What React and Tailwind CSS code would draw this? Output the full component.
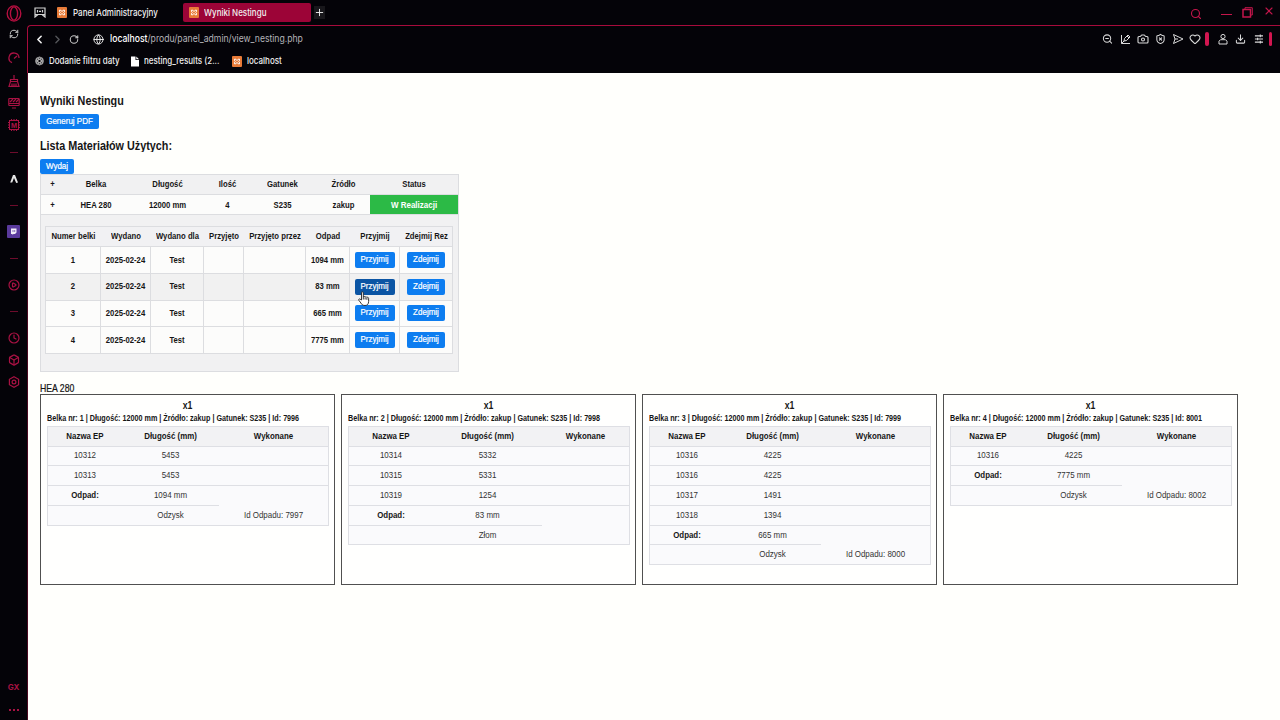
import {
  Box, Camera, ChevronLeft, ChevronRight, CirclePlay, Clock, Download, Globe, Heart,
  Plus, RefreshCw, RotateCw, Search, ShieldX, X, ZoomOut,
} from 'lucide-react';

const beams = [
  { nr: 1, waste: '1094 mm' },
  { nr: 2, waste: '83 mm', active: true },
  { nr: 3, waste: '665 mm' },
  { nr: 4, waste: '7775 mm' },
];

const cards = [
  { nr: 1, id: 7996, rows: [['10312', '5453'], ['10313', '5453']], waste: '1094 mm', kind: 'Odzysk', wasteId: 7997 },
  { nr: 2, id: 7998, rows: [['10314', '5332'], ['10315', '5331'], ['10319', '1254']], waste: '83 mm', kind: 'Złom' },
  { nr: 3, id: 7999, rows: [['10316', '4225'], ['10316', '4225'], ['10317', '1491'], ['10318', '1394']], waste: '665 mm', kind: 'Odzysk', wasteId: 8000 },
  { nr: 4, id: 8001, rows: [['10316', '4225']], waste: '7775 mm', kind: 'Odzysk', wasteId: 8002 },
];

const mainCols = 'grid grid-cols-[23px_64px_79px_41px_69px_53px_88px] items-center text-center';
const beamCols = 'grid grid-cols-[55px_50px_53px_40px_62px_44px_50px_53px] text-center';

// tall, narrow lettering
const T = ({ children, className = '' }) => (
  <span className={`inline-block scale-y-[1.16] whitespace-nowrap ${className}`}>{children}</span>
);

const Xampp = () => (
  <svg viewBox="0 0 10 11" className="w-[10px] h-[11px] shrink-0">
    <rect width="10" height="11" rx="1" fill="#e87b38" />
    <path d="M2.5 3.2h1.3L5 4.6l1.2-1.4h1.3v1.5l-.9.8.9.8v1.5H6.2L5 6.4 3.8 7.8H2.5V6.3l.9-.8-.9-.8z" fill="none" stroke="#fff" strokeWidth="1" />
  </svg>
);

const Dash = ({ className }) => <div className={`w-2 h-px shrink-0 bg-[#6e0c2c] ${className}`} />;

const Sidebar = () => (
  <div className="w-7 shrink-0 h-full flex flex-col items-center pr-px text-[#a81243] bg-[#040308]">
    <svg viewBox="0 0 16 17" className="w-4 h-[17px] mt-[5px] shrink-0" fill="none" stroke="#b30f3f" strokeWidth="1.4">
      <ellipse cx="8" cy="8.5" rx="6.8" ry="7.6" />
      <ellipse cx="8" cy="8.5" rx="3.6" ry="6.6" />
    </svg>
    <RefreshCw className="w-[10px] h-3 mt-1.5 shrink-0 text-[#c9c9c9]" strokeWidth={2.4} />
    <svg viewBox="0 0 12 12" className="w-3 h-3 mt-3 shrink-0" fill="none" stroke="currentColor" strokeWidth="1.3">
      <path d="M4 10.6A5 5 0 1 1 11 6M6 6.5l3-2.6" />
    </svg>
    <svg viewBox="0 0 12 12" className="w-3 h-3 mt-[11px] shrink-0" fill="none" stroke="currentColor" strokeWidth="1.2">
      <path d="M6 0v4M2.5 4.5h7v2h-7zM2.5 6.5L1 11.3h10L9.5 6.5M4 8.5v2.5M6 8.5v2.5M8 8.5v2.5" />
    </svg>
    <svg viewBox="0 0 12 12" className="w-3 h-3 mt-2.5 shrink-0" fill="none" stroke="currentColor" strokeWidth="1.2">
      <rect x=".8" y="1.5" width="10.4" height="7" rx=".8" />
      <path d="M1 6.5h10M2 5l3-3M5 5l3-3M8 5l3-3M4 11h4" />
    </svg>
    <svg viewBox="0 0 12 12" className="w-3 h-3 mt-2.5 shrink-0" fill="none" stroke="currentColor">
      <rect x="1.5" y="1.5" width="9" height="9" />
      <path d="M3.5 0v1M6 0v1M8.5 0v1M3.5 11v1M6 11v1M8.5 11v1M0 3.5h1M0 6h1M0 8.5h1M11 3.5h1M11 6h1M11 8.5h1" />
      <text x="6" y="8.500" textAnchor="middle" fill="currentColor" stroke="none" className="font-['Inter'] font-bold text-[6.500px]">M</text>
    </svg>
    <Dash className="mt-[21px]" />
    <svg viewBox="0 0 12 12" className="w-3 h-3 mt-5 shrink-0">
      <path d="M5 2h2l3 7.5-1.8.5L6 5 4.2 9.5H2.2z" fill="#e6e6e6" />
    </svg>
    <Dash className="mt-5" />
    <svg viewBox="0 0 13 13" className="w-[13px] h-[13px] mt-[19px] shrink-0">
      <rect width="13" height="13" rx="1" fill="#5a3a9c" />
      <path d="M4 3.5h5.5v4L8 9H6.5L5.5 10V9H4z" fill="#f2eef8" />
      <path d="M6 5v2M7.7 5v2" stroke="#5a3a9c" strokeWidth=".7" />
    </svg>
    <Dash className="mt-5" />
    <CirclePlay className="w-3 h-3 mt-5 shrink-0" strokeWidth={2.4} />
    <Dash className="mt-5" />
    <Clock className="w-3 h-3 mt-5 shrink-0" strokeWidth={2.4} />
    <Box className="w-3 h-3 mt-2.5 shrink-0" strokeWidth={2.4} />
    <svg viewBox="0 0 12 12" className="w-3 h-3 mt-2.5 shrink-0" fill="none" stroke="currentColor" strokeWidth="1.2">
      <path d="M6 .7l4.600 2.600v5.400L6 11.300 1.400 8.700V3.300z" />
      <circle cx="6" cy="6" r="1.900" />
    </svg>
    <div className="mt-auto font-['Inter'] text-[8px] leading-[10px] font-bold tracking-tight">GX</div>
    <div className="flex gap-[2px] mt-[17px] mb-[9px]">
      {[0, 1, 2].map((i) => <div key={i} className="w-[2px] h-[2px] bg-[#a81243]" />)}
    </div>
  </div>
);

const Chrome = () => (
  <div className="h-[73px] shrink-0 flex flex-col text-[8px] text-[#f0f0f0] font-['Inter',sans-serif] font-medium">
    <div className="h-[25px] shrink-0 flex items-center pl-[6px]">
      <svg viewBox="0 0 12 11" className="w-3 h-[11px]" fill="none" stroke="#d5d5d5" strokeWidth="1.2">
        <path d="M1 1h10v6.500H1zM1 7.500V10l3-2.500M11 7.500V10L8 7.500M3.500 3v2.500M8.500 3v2.500M5 4.300h2" />
      </svg>
      <div className="w-[131px] ml-[11px] flex items-center gap-[6px]">
        <Xampp />
        <T>Panel Administracyjny</T>
      </div>
      <div className="w-[128px] h-[19px] -ml-[5px] pl-[6px] flex items-center gap-[5px] rounded-[2px] bg-[#9c0437]">
        <Xampp />
        <T>Wyniki Nestingu</T>
      </div>
      <div className="w-[11px] h-[13px] ml-[3px] flex items-center justify-center bg-[#18171b]">
        <Plus className="w-[11px] h-[11px]" />
      </div>
      <div className="ml-auto mr-[5px] flex items-center text-[#c4164b]">
        <Search className="w-3 h-3 mr-[19px] mt-[3px]" strokeWidth={2.2} />
        <div className="w-[11px] h-px mr-[10px] mt-[3px] bg-[#c4164b]" />
        <svg viewBox="0 0 11 11" className="w-[11px] h-[11px] mr-[10px] -mt-px" fill="none" stroke="currentColor">
          <path d="M3 2.5V.7h7.300V8H8.500" />
          <rect x="1" y="2.5" width="7.5" height="7.5" strokeWidth="1.5" />
        </svg>
        <X className="w-3 h-3 -mt-[3px]" strokeWidth={2.2} />
      </div>
    </div>
    <div className="flex-1 -ml-px pl-px flex flex-col border-t border-l border-[#a80b3c] rounded-tl-[4px]">
      <div className="h-[26px] pl-[4px] flex items-center">
        <ChevronLeft className="w-[13px] h-[13px]" strokeWidth={3} />
        <ChevronRight className="w-[13px] h-[13px] ml-[5px] text-[#55565a]" strokeWidth={2.5} />
        <RotateCw className="w-[10px] h-[11px] ml-[5px] text-[#c9c9c9]" strokeWidth={2.5} />
        <Globe className="w-[11px] h-[11px] ml-[14px]" />
        <T className="ml-[6px] text-[8.650px] font-normal text-[#b5b5ba]">
          <span className="font-medium text-white">localhost</span>/produ/panel_admin/view_nesting.php
        </T>
        <div className="ml-auto mr-[8px] flex items-center text-[#dadada]">
          <ZoomOut className="w-[11px] h-3 mr-[7px]" strokeWidth={2.2} />
          <svg viewBox="0 0 11 12" className="w-[11px] h-3 mr-[6px]" fill="none" stroke="currentColor">
            <path d="M1.5 2v8.5H10M4 8l.5-2.5L8 2l2 2-3.5 3.5zM7 3l2 2M1.5 10.5L4 8" />
          </svg>
          <Camera className="w-3 h-3 mr-[6px]" strokeWidth={2.2} />
          <ShieldX className="w-[11px] h-3 mr-[6px]" strokeWidth={2.2} />
          <svg viewBox="0 0 12 12" className="w-3 h-3 mr-[5px]" fill="none" stroke="currentColor" strokeLinejoin="round">
            <path d="M1.5 1.5L11 6l-9.5 4.5L3 6zM3 6h3" />
          </svg>
          <Heart className="w-3 h-3 mr-[4px]" strokeWidth={2.2} />
          <div className="w-[4px] h-[14px] mr-[9px] bg-[#d21650] rounded-xs" />
          <svg viewBox="0 0 10 12" className="w-[10px] h-3 mr-[7px]" fill="none" stroke="currentColor">
            <circle cx="5" cy="3.5" r="2.1" />
            <path d="M1 11V8.200l1.500-1.500h5L9 8.200V11z" />
          </svg>
          <Download className="w-[11px] h-3 mr-[8px]" strokeWidth={2.2} />
          <svg viewBox="0 0 10 12" className="w-[9px] h-3 mr-[6px]" fill="none" stroke="currentColor" strokeWidth="1.2">
            <path d="M1 2.500h9M1 6h9M1 9.500h9M7 1v3M4 4.500v3M7 8v3" />
          </svg>
          <div className="w-[3px] h-[14px] bg-[#d21650] rounded-xs" />
        </div>
      </div>
      <div className="h-[18px] pl-[6px] flex items-center">
        <svg viewBox="0 0 10 10" className="w-[9px] h-[10px]" fill="none" stroke="#bdbdbd" strokeWidth=".9">
          <circle cx="5" cy="5" r="4.4" />
          <ellipse cx="5" cy="5" rx="4" ry="1.8" transform="rotate(30 5 5)" />
          <ellipse cx="5" cy="5" rx="4" ry="1.8" transform="rotate(90 5 5)" />
          <ellipse cx="5" cy="5" rx="4" ry="1.8" transform="rotate(150 5 5)" />
        </svg>
        <T className="ml-[5px] w-[81px]">Dodanie filtru daty</T>
        <svg viewBox="0 0 10 11" className="w-[10px] h-[11px]" fill="#fff">
          <path d="M1 .5h4.500V4H9v6.500H1zM6.300.5L9 3.200H6.300z" />
        </svg>
        <T className="ml-[4px] w-[88px]">nesting_results (2...</T>
        <Xampp />
        <T className="ml-[5px]">localhost</T>
      </div>
    </div>
  </div>
);

const Button = ({ children, active, className = '' }) => (
  <button type="button" className={`flex items-center justify-center rounded-[2px] text-[8px] leading-none font-normal text-white [-webkit-text-stroke:0.2px_#fff] ${active ? 'bg-[#0b55a4]' : 'bg-[#0d7df0]'} ${className}`}>
    <T>{children}</T>
  </button>
);

const BeamTable = () => (
  <div className="w-[408px] border-l border-t border-[#dcdde0] text-[7.7px] font-bold">
    <div className={`${beamCols} h-5 items-center bg-[#f1f1f3] border-b border-r border-[#dcdde0]`}>
      {['Numer belki', 'Wydano', 'Wydano dla', 'Przyjęto', 'Przyjęto przez', 'Odpad', 'Przyjmij', 'Zdejmij Rez'].map((h) => (
        <div key={h} className="flex justify-center"><T>{h}</T></div>
      ))}
    </div>
    {beams.map((b) => (
      <div key={b.nr} className={`${beamCols} h-[26.75px] border-b border-[#dcdde0] ${b.active ? 'bg-[#f1f1f1]' : 'bg-[#fcfcfb]'}`}>
        {[b.nr, '2025-02-24', 'Test', '', '', b.waste].map((v, i) => (
          <div key={i} className="pt-px flex items-center justify-center border-r border-[#dcdde0]"><T>{v}</T></div>
        ))}
        <div className="flex items-center justify-center border-r border-[#dcdde0]">
          <Button active={b.active} className="w-10 h-4">Przyjmij</Button>
        </div>
        <div className="flex items-center justify-center border-r border-[#dcdde0]">
          <Button className="w-[38px] h-4">Zdejmij</Button>
        </div>
      </div>
    ))}
  </div>
);

const BeamCard = ({ card }) => {
  const cols = card.nr === 2 ? 'grid grid-cols-[84px_109px_87px]' : 'grid grid-cols-[74px_97px_109px]';
  const cell = 'pt-px flex items-center justify-center border-b border-[#dedfe4]';
  return (
    <div className="w-[295px] h-[191px] border border-[#505050] px-[6px] bg-[#fffffe]">
      <div className="h-[17px] mt-[2px] pt-[2px] flex items-center justify-center text-[8.7px] font-bold"><T>x1</T></div>
      <div className="h-3 pb-[2px] flex items-center text-[7.2px] font-bold">
        <T className="scale-y-[1.06]">Belka nr: {card.nr} | Długość: 12000 mm | Źródło: zakup | Gatunek: S235 | Id: {card.id}</T>
      </div>
      <div className="w-[282px] border border-b-0 border-[#dedfe4] bg-[#fafafc] text-[7.95px]">
        <div className={`${cols} h-[19.5px] bg-[#f2f2f4] font-bold text-[7.9px]`}>
          <div className={cell}><T>Nazwa EP</T></div>
          <div className={cell}><T>Długość (mm)</T></div>
          <div className={cell}><T>Wykonane</T></div>
        </div>
        {card.rows.map(([name, len], i) => (
          <div key={i} className={`${cols} h-[19.8px] text-[#333]`}>
            <div className={cell}><T>{name}</T></div>
            <div className={cell}><T>{len}</T></div>
            <div className={cell} />
          </div>
        ))}
        <div className={`${cols} h-[19.8px]`}>
          <div className={`${cell} font-bold text-[7.9px]`}><T>Odpad:</T></div>
          <div className={`${cell} text-[#333]`}><T>{card.waste}</T></div>
        </div>
        <div className={`${cols} h-[19.8px] text-[#333]`}>
          <div className={cell} />
          <div className={cell}><T>{card.kind}</T></div>
          <div className={cell}>{card.wasteId && <T>Id Odpadu: {card.wasteId}</T>}</div>
        </div>
      </div>
    </div>
  );
};

const Pointer = () => (
  <svg viewBox="0 0 12 15" className="absolute left-[358px] top-[291px] w-3 h-[15px]" fill="#fff" stroke="#222" strokeWidth=".9">
    <path d="M3.5 9V1.7c0-1.2 1.8-1.2 1.8 0V6c.2-.8 1.7-.7 1.8.2.3-.7 1.7-.5 1.8.3.5-.5 1.7-.2 1.7.8V10.5c0 2.500-1.300 4-3.600 4-2.500 0-3.300-1.100-4.100-2.500L.8 9.200c-.5-1 .6-1.700 1.300-1z" />
    <path d="M5.3 6v2.5M7.1 6.5v2M8.9 7v1.8" />
  </svg>
);

const App = () => (
  <div className="relative w-[1280px] h-[720px] flex overflow-hidden bg-[#040308]">
    <Sidebar />
    <div className="flex-1 min-w-0 flex flex-col">
      <Chrome />
      <div className="flex-1 -ml-px pl-3 border-l border-[#4b0820] bg-[#fffffc] text-[#161616] font-['Liberation_Sans',Arial,sans-serif]">
        <h1 className="mt-[20px] h-[15px] flex items-center text-[10.8px] font-bold"><T>Wyniki Nestingu</T></h1>
        <Button className="w-[59px] h-[15px] mt-[6px]">Generuj PDF</Button>
        <h2 className="mt-[9px] h-[15px] flex items-center text-[10.8px] font-bold"><T>Lista Materiałów Użytych:</T></h2>
        <Button className="w-[34px] h-[15px] mt-[6px]">Wydaj</Button>
        <div className="w-[419px] h-[198px] border border-[#dcdde0] bg-[#f1f1f2] text-[7.7px] font-bold">
          <div className={`${mainCols} h-5 border-b border-[#dcdde0]`}>
            {['+', 'Belka', 'Długość', 'Ilość', 'Gatunek', 'Źródło', 'Status'].map((h) => <div key={h} className="pt-px"><T>{h}</T></div>)}
          </div>
          <div className={`${mainCols} h-5 border-b border-[#dcdde0] bg-[#fcfcfb]`}>
            {['+', 'HEA 280', '12000 mm', '4', 'S235', 'zakup'].map((v) => <div key={v} className="pt-[2px]"><T>{v}</T></div>)}
            <div className="h-full pt-[2px] flex items-center justify-center bg-[#2cba46] text-white text-[8px]"><T>W Realizacji</T></div>
          </div>
          <div className="pt-[11px] pl-1">
            <BeamTable />
          </div>
        </div>
        <div className="mt-[12px] h-[10px] pt-[2px] flex items-center text-[8.7px] [-webkit-text-stroke:0.2px_#161616]"><T>HEA 280</T></div>
        <div className="flex gap-[6px]">
          {cards.map((card) => <BeamCard key={card.nr} card={card} />)}
        </div>
      </div>
    </div>
    <Pointer />
  </div>
);

export default App;
